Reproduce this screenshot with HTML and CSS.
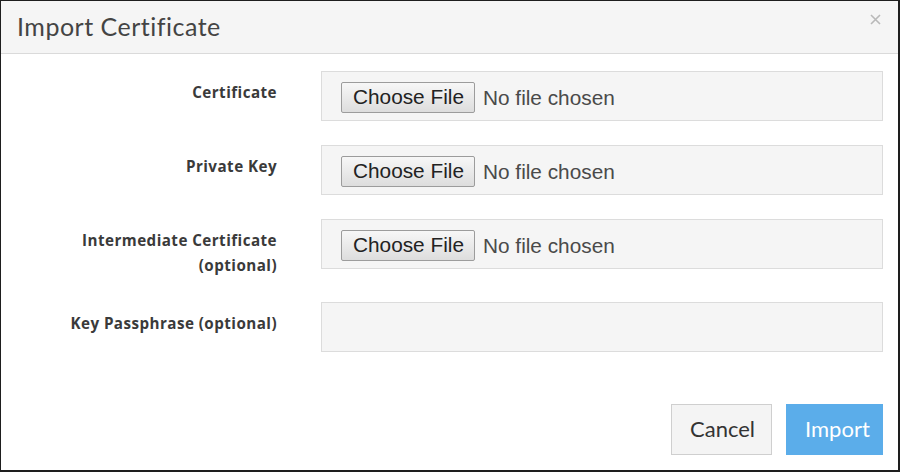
FILE: index.html
```html
<!DOCTYPE html>
<html>
<head>
<meta charset="utf-8">
<link rel="stylesheet" href="styles.css">
</head>
<body>
<div class="modal">
  <div class="modal-header">
    <h1 class="modal-title">Import Certificate</h1>
    <button class="close" aria-label="Close">
      <svg width="11" height="11" viewBox="0 0 11 11"><path d="M1 1L10 10M10 1L1 10" stroke="#b9b9b9" stroke-width="1.6" fill="none"/></svg>
    </button>
  </div>
  <div class="modal-body">
    <div class="form-row">
      <label class="form-label">Certificate</label>
      <div class="field">
        <span class="file-btn">Choose File</span><span class="file-text">No file chosen</span>
      </div>
    </div>
    <div class="form-row">
      <label class="form-label">Private Key</label>
      <div class="field">
        <span class="file-btn">Choose File</span><span class="file-text">No file chosen</span>
      </div>
    </div>
    <div class="form-row">
      <label class="form-label">Intermediate Certificate<br>(optional)</label>
      <div class="field">
        <span class="file-btn">Choose File</span><span class="file-text">No file chosen</span>
      </div>
    </div>
    <div class="form-row">
      <label class="form-label">Key Passphrase (optional)</label>
      <div class="field"></div>
    </div>
  </div>
  <div class="modal-footer">
    <button class="btn btn-cancel">Cancel</button>
    <button class="btn btn-import">Import</button>
  </div>
</div>
</body>
</html>
```
FILE: styles.css
```css
* { box-sizing: border-box; }
html, body { margin: 0; padding: 0; background: #ffffff; }
body { font-family: "Lato", "Open Sans", sans-serif; color: #333; }

.modal {
  width: 900px;
  height: 472px;
  border: 1px solid #1e1e1e;
  border-right-width: 2px;
  border-bottom-width: 2px;
  background: #fff;
  display: flex;
  flex-direction: column;
}

.modal-header {
  height: 53px;
  background: #f5f5f5;
  border-bottom: 1px solid #dadada;
  display: flex;
  align-items: center;
  justify-content: space-between;
  padding: 0 16px 0 16px;
}
.modal-title {
  margin: 0;
  font-family: "Lato", sans-serif;
  font-weight: 400;
  font-size: 25px;
  color: #444;
  letter-spacing: 0.5px;
  padding-bottom: 2px;
}
.close {
  border: 0;
  background: transparent;
  padding: 0;
  margin-top: -14px;
  margin-right: 0;
  width: 12px;
  height: 12px;
  display: flex;
}

.modal-body {
  padding: 17px 0 0 0;
  display: flex;
  flex-direction: column;
  gap: 24px;
}
.form-row {
  display: grid;
  grid-template-columns: 276px 562px;
  column-gap: 44px;
  align-items: start;
}
.form-label {
  text-align: right;
  font-family: "Open Sans", "Lato", sans-serif;
  font-weight: 700;
  font-size: 15.2px;
  letter-spacing: 0.45px;
  line-height: 25px;
  color: #3a3a3a;
  padding-top: 9px;
}
.field {
  height: 50px;
  border: 1px solid #dcdcdc;
  background: #f5f5f5;
  display: flex;
  align-items: center;
  padding: 3px 0 0 19px;
  font-family: "Liberation Sans", Arial, sans-serif;
  font-size: 20.8px;
}
.file-btn {
  display: inline-block;
  height: 31px;
  line-height: 28px;
  padding: 0 10px 0 11px;
  border: 1px solid #9c9c9c;
  border-radius: 2px;
  background: linear-gradient(#f7f7f7, #dddddd);
  color: #222;
}
.file-text {
  margin-left: 8px;
  color: #4a4a4a;
}

.modal-footer {
  margin-top: auto;
  display: flex;
  justify-content: flex-end;
  gap: 14px;
  padding: 0 15px 15px 0;
}
.btn {
  height: 51px;
  font-family: "Lato", sans-serif;
  font-size: 22px;
  padding: 0 18px 3px;
  border: 1px solid #cfcfcf;
  border-radius: 0;
}
.btn-cancel {
  width: 101px;
  background: #f4f4f4;
  color: #333;
}
.btn-import {
  width: 97px;
  background: #5badea;
  border-color: #5badea;
  color: #fff;
}
```
